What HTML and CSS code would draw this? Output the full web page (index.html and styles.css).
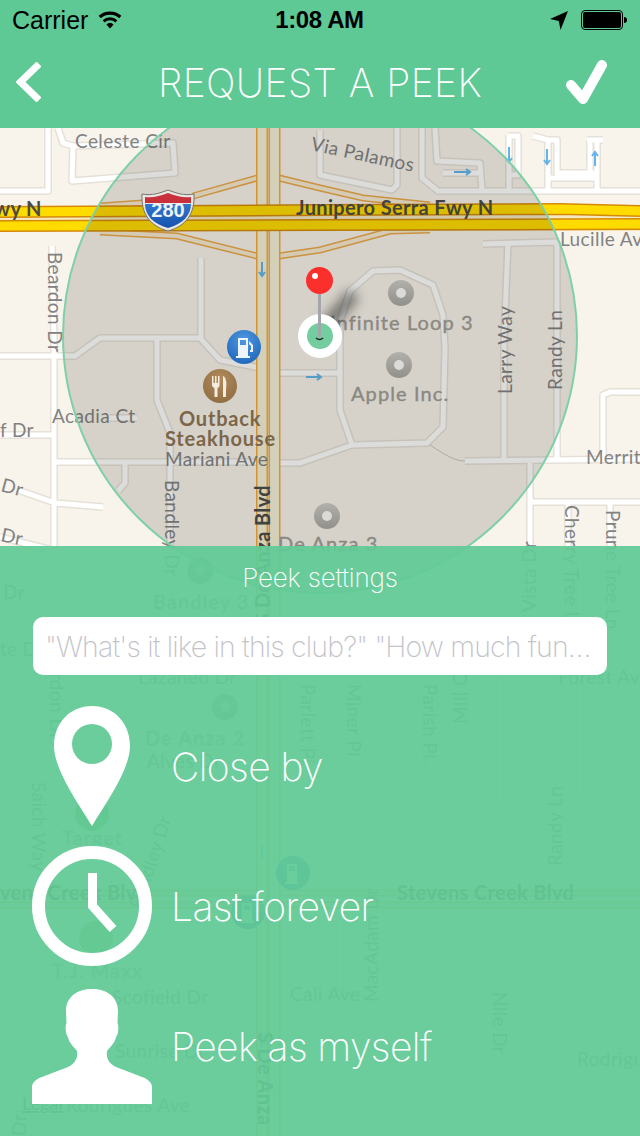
FILE: index.html
```html
<!DOCTYPE html>
<html lang="en">
<head>
<meta charset="utf-8">
<title>Request a Peek</title>
<link rel="stylesheet" href="styles.css">
</head>
<body>
<div class="app">
  <header class="top">
    <div class="status">
      <div class="status-left">
        <span class="carrier">Carrier</span>
        <svg class="wifi" viewBox="0 0 24 18"><path d="M12 17.5 8.400 13.400a5.400 5.400 0 0 1 7.200 0zM6.600 11.400 4.600 9.200a11 11 0 0 1 14.800 0l-2 2.200a8 8 0 0 0-10.800 0zM2.800 7.200 .6 4.800a17 17 0 0 1 22.800 0l-2.200 2.400a14 14 0 0 0-18.400 0z"/></svg>
      </div>
      <span class="time">1:08 AM</span>
      <div class="status-right">
        <svg class="arrow" viewBox="0 0 18 19"><path d="M18 0 10.500 19 8.800 10 0 8z"/></svg>
        <svg class="battery" viewBox="0 0 46 20"><rect x=".5" y=".5" width="41" height="19" rx="3.500" fill="none" stroke="#000"/><rect x="2" y="2" width="38" height="16" rx="2"/><path d="M43 7c2 0 3 1 3 3s-1 3-3 3z"/></svg>
      </div>
    </div>
    <nav class="nav">
      <svg class="back" viewBox="0 0 25 40"><path d="M23 2 4.500 20 23 38" fill="none" stroke="#fff" stroke-width="7"/></svg>
      <h1 class="title">REQUEST A PEEK</h1>
      <svg class="check" viewBox="0 0 42 44"><path d="M6 25 18 39 37 5" fill="none" stroke="#fff" stroke-width="10" stroke-linecap="round" stroke-linejoin="round"/></svg>
    </nav>
  </header>

  <main class="stage">
    <svg class="map" viewBox="0 128 640 1008">
      <defs>
        <radialGradient id="blue" cx=".5" cy=".3" r=".8"><stop offset="0" stop-color="#4f97e0"/><stop offset="1" stop-color="#1b62b8"/></radialGradient>
        <radialGradient id="brown" cx=".5" cy=".3" r=".8"><stop offset="0" stop-color="#b08a5c"/><stop offset="1" stop-color="#8d6a40"/></radialGradient>
        <linearGradient id="gray" x1="0" y1="0" x2="0" y2="1"><stop offset="0" stop-color="#b2b0ab"/><stop offset="1" stop-color="#92908b"/></linearGradient>
        <linearGradient id="shield" x1="0" y1="0" x2="0" y2="1"><stop offset="0" stop-color="#2f78cc"/><stop offset="1" stop-color="#1650ad"/></linearGradient>
        <filter id="soft" x="-50%" y="-50%" width="200%" height="200%"><feGaussianBlur stdDeviation="6"/></filter>
      </defs>
      <rect x="0" y="128" width="640" height="1008" fill="#f8f4ec"/>

      <g class="street-edge">
        <path id="s1" d="M0 191H48V128M58 128 63 143 73 146 72 181 175 173 173 143 73 146M52 246 54 340V546M0 356H75L100 338H200L220 360 260 368M201 258V338M157 340V400L170 433V600M55 462H260M279 463H300L352 445 427 443 443 427 445 348 443 315 433 285 400 270 373 271 350 291 340 321V410L352 445M279 373H341M110 418H137M0 435H55M125 462V483L118 491M18 490 55 503 103 507M0 537 60 552M320 131V175L392 190 397 185V128M422 128V178L438 191H640M435 128 437 161 480 163 482 191M443 173H480M509 135V191M509 136H518V175H509M533 136 548 140V191M548 140H557V173H597V191M548 178H597M587 140H603M590 140V173M597 140V173M483 244 557 242M508 243 504 340V460M557 242V458M465 461 640 459M530 462V640M530 502H640M568 502V640M610 502V640M603 458V395L610 392H640M54 546V760M0 700H260M279 700H460M300 750H420L430 820M430 700V880M470 640V880M500 640V800M0 805H260M20 1010H120V1100M279 1000H450L510 930 560 880 640 840M450 1000V1060L480 1090H640M560 1000 640 960M300 1085H450M340 890V1000M120 890V1000M0 1115H260M279 1115H640M580 560V800H640"/>
      </g>
      <use href="#s1" class="street-core"/>
      <path class="thin" d="M430 445C445 455 455 461 465 461"/>

      <g class="ramp-edge">
        <path id="r1" d="M257 178 193 196M143 203 100 206M100 232 177 236 257 256M279 178 320 188 363 198 430 205M279 256 320 250 390 231 430 230M0 893H640M0 905H640"/>
      </g>
      <use href="#r1" class="ramp-core"/>

      <path class="art-edge" d="M262 128V1136M274.500 128V1136"/>
      <path class="art-core" d="M262 128V1136M274.500 128V1136"/>

      <path class="hwy-gap" d="M0 219H640"/>
      <path class="hwy-edge" d="M0 212 320 210 560 209 640 211M0 226 320 225 640 224"/>
      <path class="hwy-core" d="M0 212 320 210 560 209 640 211M0 226 320 225 640 224"/>

      <g class="flows">
        <path d="M262 262V276M259 272 262 276 265 272M454 172H470M466 169 470 172 466 175M306 377H321M317 374 321 377 317 380M509 147V162M506 158 509 162 512 158M547 149V164M544 160 547 164 550 160M595 166V152M592 156 595 152 598 156M262 1032V1048M262 860V845"/>
      </g>

      <g class="label">
        <text x="75" y="148">Celeste Cir</text>
        <text transform="translate(310 150) rotate(12)">Via Palamos</text>
        <text x="560" y="246">Lucille Av</text>
        <text transform="translate(48 252) rotate(90)">Beardon Dr</text>
        <text transform="translate(512 394) rotate(-90)">Larry Way</text>
        <text transform="translate(562 390) rotate(-90)">Randy Ln</text>
        <text x="52" y="423">Acadia Ct</text>
        <text x="0" y="437">f Dr</text>
        <text transform="translate(0 491) rotate(15)">Dr</text>
        <text transform="translate(0 541) rotate(12)">Dr</text>
        <text x="165" y="466">Mariani Ave</text>
        <text transform="translate(165 480) rotate(90)">Bandley Dr</text>
        <text x="586" y="464">Merrit</text>
        <text transform="translate(565 505) rotate(90)">Cherry Tree Ln</text>
        <text transform="translate(606 510) rotate(90)">Prune Tree Ln</text>
        <text transform="translate(536 612) rotate(-90)">Vista Dr</text>
        <text x="3" y="599">Dr</text>
        <text x="0" y="656">te Dr</text>
        <text x="558" y="684">Forest Av</text>
        <text x="138" y="684">Lazaneo Dr</text>
        <text transform="translate(50 640) rotate(90)">Beardon Dr</text>
        <text transform="translate(301 684) rotate(90)">Parlett Pl</text>
        <text transform="translate(347 684) rotate(90)">Miner Pl</text>
        <text transform="translate(423 684) rotate(90)">Parish Pl</text>
        <text transform="translate(467 724) rotate(-90)">Mill Ct</text>
        <text x="147" y="768">Alves Dr</text>
        <text transform="translate(32 782) rotate(90)">Saich Way</text>
        <text transform="translate(142 910) rotate(-72)">Bandley Dr</text>
        <text transform="translate(562 866) rotate(-90)">Randy Ln</text>
        <text x="112" y="1004">Scofield Dr</text>
        <text x="115" y="1058">Sunrise Dr</text>
        <text x="290" y="1001">Cali Ave</text>
        <text transform="translate(378 1002) rotate(-90)">MacAdam Dr</text>
        <text transform="translate(493 992) rotate(90)">Nile Dr</text>
        <text x="66" y="1112">Rodrigues Ave</text>
        <text x="577" y="1066">Rodrigu</text>
        <text transform="translate(26 1136) rotate(-90)">Dr</text>
      </g>
      <g class="label-bold">
        <text x="296" y="215">Junipero Serra Fwy N</text>
        <text x="-6" y="216">wy N</text>
        <text text-anchor="end" transform="translate(270 485) rotate(-90)">S De Anza Blvd</text>
        <text x="397" y="900">Stevens Creek Blvd</text>
        <text x="0" y="900">vens Creek Blvd</text>
        <text transform="translate(258 1032) rotate(90)">S De Anza</text>
      </g>
      <g class="label-poi">
        <text x="330" y="330">Infinite Loop 3</text>
        <text x="351" y="401">Apple Inc.</text>
        <text x="278" y="551">De Anza 3</text>
        <text x="153" y="609">Bandley 3</text>
        <text x="145" y="745">De Anza 2</text>
        <text x="62" y="845">Target</text>
        <text x="52" y="978">T.J. Maxx</text>
      </g>
      <g class="label-food">
        <text x="179" y="426">Outback</text>
        <text x="165" y="446">Steakhouse</text>
      </g>
      <text class="legal" x="22" y="1110">Legal</text>

      <circle cx="200" cy="571" r="13" fill="url(#gray)"/><circle cx="200" cy="571" r="5" fill="#dcdad6"/>
      <circle cx="225" cy="707" r="13" fill="url(#gray)"/><circle cx="225" cy="707" r="5" fill="#dcdad6"/>
      <circle cx="92" cy="814" r="17" fill="#7fb35a"/>
      <circle cx="96" cy="938" r="17" fill="#8ab85a"/>
      <circle cx="293" cy="873" r="17" fill="url(#blue)"/>
      <path d="M287 864H297V882H299V884H285V882H287ZM289 866V871H295V866Z" fill="#eef4fb"/>
      <circle cx="248" cy="912" r="17" fill="url(#blue)"/>
      <path d="M242 903H252V921H254V923H240V921H242ZM244 905V910H250V905Z" fill="#eef4fb"/>

      <circle class="zone" cx="320" cy="336" r="257"/>

      <circle cx="401" cy="293" r="13" fill="url(#gray)"/><circle cx="401" cy="293" r="5" fill="#dcdad6"/>
      <circle cx="399" cy="365" r="13" fill="url(#gray)"/><circle cx="399" cy="365" r="5" fill="#dcdad6"/>
      <circle cx="327" cy="516" r="13" fill="url(#gray)"/><circle cx="327" cy="516" r="5" fill="#dcdad6"/>

      <g>
        <circle cx="244" cy="347" r="17" fill="url(#blue)"/>
        <path d="M238 338H248V356H250V358H236V356H238ZM240 340V345H246V340ZM249 341 253 345V352H250V350H251V346L249 344Z" fill="#eef4fb"/>
        <circle cx="220" cy="386" r="17" fill="url(#brown)"/>
        <path d="M212 376H213.500V383H215V376H216.500V383H218V376H219.500V385C219.500 387 218 388 217.500 388V397H214.500V388C214 388 212 387 212 385ZM223 376C226 377 227 383 226 389V397H223Z" fill="#f5ece0"/>
      </g>

      <g>
        <path d="M142 194C152 196 160 193 168 190 176 193 184 196 194 194 195 214 186 226 168 231 150 226 141 214 142 194Z" fill="#e8e6e0" stroke="#77736c"/>
        <path d="M145 197C153 198 160 196 168 193 176 196 183 198 191 197V203H145Z" fill="#c8303c"/>
        <path d="M145 204H191C191 215 183 224 168 228 153 224 145 215 145 204Z" fill="url(#shield)"/>
        <text class="shield-num" x="168" y="217">280</text>
      </g>

      <path class="pin-shadow" d="M324 328 354 294"/>
      <circle cx="320" cy="336" r="22" fill="#fff"/>
      <circle cx="320" cy="336" r="13" fill="#74cd9f"/>
      <path d="M316 338Q319.500 341 323 338" fill="none" stroke="#222" stroke-width="1.500"/>
      <path d="M319.500 290V337" stroke="#a5a6ab" stroke-width="3"/>
      <circle cx="319.500" cy="280.500" r="13.500" fill="#fb2f2c"/>
      <circle cx="315" cy="276" r="3" fill="#fff"/>
    </svg>

    <section class="panel">
      <h2 class="panel-title">Peek settings</h2>
      <div class="field"><span class="placeholder">"What's it like in this club?" "How much fun…</span></div>
      <ul class="options">
        <li class="option">
          <span class="option-icon"><svg class="icon-pin" viewBox="0 0 76 120"><path fill-rule="evenodd" fill="#fff" d="M38 0C60 0 76 17 76 40 76 64 50 100 38 120 26 100 0 64 0 40 0 17 16 0 38 0ZM38 18A20 20 0 1 0 38 58 20 20 0 1 0 38 18Z"/></svg></span>
          <span class="option-text">Close by</span>
        </li>
        <li class="option">
          <span class="option-icon"><svg class="icon-clock" viewBox="0 0 120 120"><circle cx="60" cy="60" r="53.500" fill="none" stroke="#fff" stroke-width="13"/><path d="M60.500 27V60L81 83" fill="none" stroke="#fff" stroke-width="9"/></svg></span>
          <span class="option-text">Last forever</span>
        </li>
        <li class="option">
          <span class="option-icon"><svg class="icon-person" viewBox="0 0 120 115"><path fill="#fff" d="M60 0C75 0 86 8 86 22L85.500 34C87 36 86.500 46 84 48 83 54 78 58 75 62 74 68 76 74 84 78L110 88C116 90 120 94 120 98V115H0V98C0 94 4 90 10 88L36 78C44 74 46 68 45 62 42 58 37 54 36 48 33.500 46 33 36 34.500 34L34 22C34 8 45 0 60 0Z"/></svg></span>
          <span class="option-text">Peek as myself</span>
        </li>
      </ul>
    </section>
  </main>
</div>
</body>
</html>
```
FILE: styles.css
```css
* { box-sizing: border-box; }
html, body { margin: 0; padding: 0; }
body { width: 640px; height: 1136px; overflow: hidden; font-family: "Inter", "Liberation Sans", sans-serif; }
h1, h2, ul { margin: 0; padding: 0; }
ul { list-style: none; }
svg { display: block; }

.app { display: flex; flex-direction: column; height: 1136px; }

.top { flex: 0 0 128px; background: #5ec995; display: flex; flex-direction: column; }

.status { height: 40px; padding: 0 13px 0 12px; display: grid; grid-template-columns: 1fr auto 1fr; align-items: center; color: #000; font-family: "Liberation Sans", Arial, sans-serif; }
.status-left { display: flex; align-items: center; gap: 10px; }
.status-right { display: flex; align-items: center; justify-content: flex-end; gap: 13px; }
.carrier { font-size: 25px; }
.time { font-size: 24px; font-weight: 700; letter-spacing: -0.4px; }
.wifi { width: 24px; height: 18px; }
.arrow { width: 18px; height: 19px; }
.battery { width: 46px; height: 20px; }

.nav { flex: 1; padding: 0 16px 4px; display: grid; grid-template-columns: 1fr auto 1fr; align-items: center; }
.back { width: 25px; height: 40px; justify-self: start; }
.check { width: 42px; height: 44px; justify-self: end; margin-right: 17px; }
.title { font-size: 39px; font-weight: 200; color: #fff; letter-spacing: 0.4px; line-height: 1; }

.stage { flex: 1; position: relative; }
.map { width: 640px; height: 1008px; }

.street-edge { fill: none; stroke: #e6e1d8; stroke-width: 8; stroke-linejoin: round; }
.street-core { fill: none; stroke: #fff; stroke-width: 5; stroke-linejoin: round; }
.thin { fill: none; stroke: #c9c5bd; stroke-width: 1; }
.ramp-edge { fill: none; stroke: #eaa84a; stroke-width: 7; }
.ramp-core { fill: none; stroke: #f7ead0; stroke-width: 4; }
.art-edge { fill: none; stroke: #f2aa3c; stroke-width: 12; }
.art-core { fill: none; stroke: #f6f1d6; stroke-width: 9; }
.hwy-gap { stroke: #f6e9c0; stroke-width: 24; }
.hwy-edge { fill: none; stroke: #d4890a; stroke-width: 12; }
.hwy-core { fill: none; stroke: #ffdb00; stroke-width: 9; }
.flows { fill: none; stroke: #62b4ea; stroke-width: 2; }
.zone { fill: rgba(20, 18, 14, 0.15); stroke: #7fd0a6; stroke-width: 2; }
.pin-shadow { fill: none; stroke: rgba(0, 0, 0, 0.45); stroke-width: 14; filter: url(#soft); }

.label text, .label-bold text, .label-poi text, .label-food text, .legal { font-family: "Lato", "Liberation Sans", sans-serif; }
.label text { font-size: 19px; fill: #828282; letter-spacing: 0.4px; }
.label-bold text { font-size: 20px; font-weight: 700; fill: #4c4a46; letter-spacing: 0.35px; }
.label-poi text { font-size: 20px; fill: #a09d97; letter-spacing: 1.1px; stroke: #a09d97; stroke-width: 0.4px; }
.label-food text { font-size: 20px; font-weight: 700; fill: #8f7453; letter-spacing: 0.8px; }
.legal { font-size: 18px; fill: #555; text-decoration: underline; }
.shield-num { font-family: "Liberation Sans", sans-serif; font-size: 20px; font-weight: 700; fill: #eef2f8; text-anchor: middle; }

.panel { position: absolute; left: 0; right: 0; top: 418px; bottom: 0; background: rgba(98, 202, 150, 0.94); display: flex; flex-direction: column; align-items: center; }
.panel-title { height: 71px; padding-top: 16px; font-size: 26px; font-weight: 200; line-height: 32px; color: #fff; letter-spacing: -0.15px; }
.field { width: 574px; height: 58px; background: #fff; border-radius: 10px; padding: 0 12px; display: flex; align-items: center; }
.placeholder { font-size: 28.5px; font-weight: 200; color: #c3c3c9; white-space: nowrap; letter-spacing: -0.85px; }
.options { width: 100%; padding: 21px 0 0 32px; }
.option { height: 140px; display: flex; align-items: center; gap: 19px; }
.option-icon { width: 120px; display: flex; justify-content: center; }
.option-text { font-size: 39px; font-weight: 200; color: #fff; letter-spacing: -0.6px; }
.icon-pin { width: 76px; height: 120px; }
.icon-clock { width: 120px; height: 120px; }
.icon-person { width: 120px; height: 115px; }
```
